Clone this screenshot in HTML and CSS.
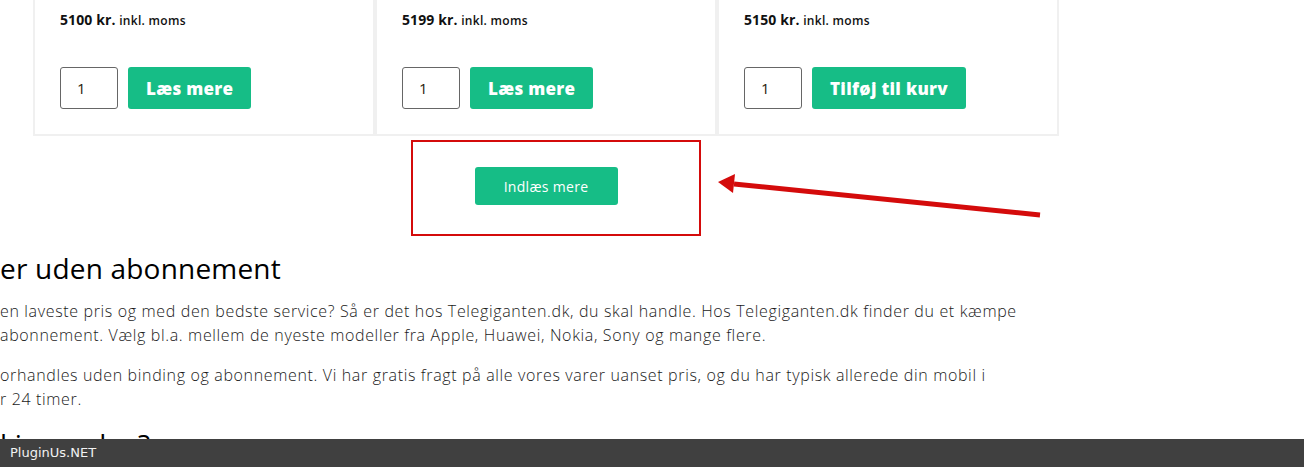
FILE: index.html
```html
<!DOCTYPE html>
<html lang="da">
<head>
<meta charset="utf-8">
<title>Mobiltelefoner</title>
<link rel="stylesheet" href="styles.css">
</head>
<body>
<div class="page">
  <div class="products">
    <div class="card">
      <div class="title">Apple iPhone 12 Pro</div>
      <div class="price"><b>5100 kr.</b> <span>inkl. moms</span></div>
      <div class="actions"><input class="qty" type="text" value="1"><button class="btn">Læs mere</button></div>
    </div>
    <div class="card">
      <div class="title">Apple iPhone 12 Pro</div>
      <div class="price"><b>5199 kr.</b> <span>inkl. moms</span></div>
      <div class="actions"><input class="qty" type="text" value="1"><button class="btn">Læs mere</button></div>
    </div>
    <div class="card">
      <div class="title">Apple iPhone 12 Pro Max 128GB grey</div>
      <div class="price"><b>5150 kr.</b> <span>inkl. moms</span></div>
      <div class="actions"><input class="qty" type="text" value="1"><button class="btn">Tilføj til kurv</button></div>
    </div>
  </div>
  <div class="loadmore">
    <button class="more">Indlæs mere</button>
  </div>
  <div class="seo">
    <h2>er uden abonnement</h2>
    <p>en laveste pris og med den bedste service? Så er det hos Telegiganten.dk, du skal handle. Hos Telegiganten.dk finder du et kæmpe<br>abonnement. Vælg bl.a. mellem de nyeste modeller fra Apple, Huawei, Nokia, Sony og mange flere.</p>
    <p>orhandles uden binding og abonnement. Vi har gratis fragt på alle vores varer uanset pris, og du har typisk allerede din mobil i<br>r 24 timer.</p>
    <h2>l jeg vælge?</h2>
  </div>
  <div class="highlight"></div>
  <svg class="arrow" width="340" height="50" viewBox="0 0 340 50">
    <line x1="324" y1="37" x2="18" y2="6" stroke="#d40b0b" stroke-width="5"/>
    <polygon points="2,4 19,-4 17,15" fill="#d40b0b"/>
  </svg>
</div>
<div class="footer">PluginUs.NET</div>
</body>
</html>
```
FILE: styles.css
```css
html, body {
  margin: 0;
  padding: 0;
  background: #fff;
  overflow: hidden;
}
body {
  font-family: "Open Sans", "DejaVu Sans", sans-serif;
  color: #222;
  height: 467px;
}
.page {
  position: relative;
  height: 439px;
  overflow: hidden;
}
.products {
  display: grid;
  grid-template-columns: repeat(3, 342px);
  margin: -30px 0 0 33px;
}
.card {
  border: 2px solid #f0f0f0;
  padding: 0 24px 25px 25px;
  min-width: 0;
}
.title {
  font-family: "Open Sans", sans-serif;
  font-weight: 700;
  font-size: 17px;
  line-height: 30px;
  color: #111;
  white-space: nowrap;
  overflow: hidden;
}
.price {
  margin-top: 8px;
  font-size: 14px;
  line-height: 20px;
  color: #111;
}
.price b {
  font-weight: 700;
  letter-spacing: 0.1px;
}
.price span {
  font-size: 12px;
  font-weight: 600;
  letter-spacing: 0.3px;
}
.actions {
  display: flex;
  gap: 10px;
  margin-top: 36px;
}
.qty {
  width: 58px;
  height: 42px;
  box-sizing: border-box;
  border: 1px solid #666;
  border-radius: 3px;
  padding: 0 0 0 16px;
  font-family: "Open Sans", sans-serif;
  font-size: 15px;
  color: #2a1a0a;
}
.btn {
  height: 42px;
  border: none;
  border-radius: 3px;
  background: #16bd86;
  color: #fff;
  font-family: "Open Sans", sans-serif;
  font-weight: 800;
  font-size: 17px;
  letter-spacing: 0.3px;
  padding: 0 18px;
}
.loadmore {
  width: 1026px;
  margin-left: 33px;
  display: flex;
  justify-content: center;
  padding-top: 31px;
}
.more {
  width: 143px;
  height: 38px;
  border: none;
  border-radius: 3px;
  background: #16bd86;
  color: #fff;
  font-family: "Open Sans", sans-serif;
  font-size: 14px;
  font-weight: 400;
  letter-spacing: 0.3px;
}
.seo {
  padding-top: 46px;
}
.seo h2 {
  font-size: 28px;
  font-weight: 500;
  color: #000;
  margin: 0 0 14px 0;
  line-height: 34px;
  letter-spacing: 0.2px;
}
.seo p {
  font-size: 16px;
  line-height: 24px;
  margin: 0 0 16px 0;
  color: #1a1a1a;
  font-weight: 300;
  letter-spacing: 0.65px;
}
.highlight {
  position: absolute;
  left: 411px;
  top: 140px;
  width: 286px;
  height: 92px;
  border: 2px solid #d40b0b;
}
.arrow {
  position: absolute;
  left: 716px;
  top: 178px;
  overflow: visible;
}
.footer {
  height: 28px;
  background: #404040;
  color: #f2f2f2;
  font-family: "DejaVu Sans", sans-serif;
  font-size: 13px;
  line-height: 28px;
  padding-left: 10px;
}
```
